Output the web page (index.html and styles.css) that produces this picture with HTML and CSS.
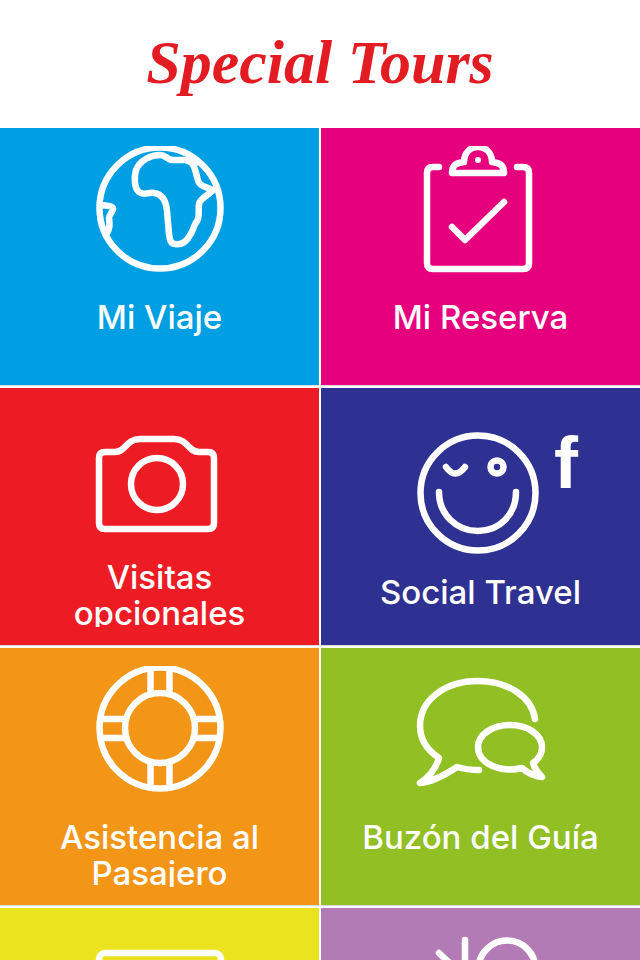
FILE: index.html
```
<!DOCTYPE html>
<html lang="es">
<head>
    <meta charset="UTF-8">
    <meta name="viewport" content="width=device-width, initial-scale=1.0">
    <title>Special Tours</title>
    <link rel="stylesheet" href="styles.css">
</head>
<body>
    <header class="header">
        <h1 class="logo">Special Tours</h1>
    </header>

    <!-- Main menu -->
    <nav class="menu">
        <a href="#viaje" class="tile blue">
            <span class="tile-content">
                <svg class="icon" viewBox="0 0 200 153" aria-hidden="true">
                    <circle cx="100" cy="62" r="60.5"/>
                    <path d="M100 9C106 9 107 14 113 14H125C133 15 134 20 136 27C138 34 138 38 143 40L153 44C149 49 140 52 139 58C138 64 140 70 137 75C133 80 134 84 130 89C127 95 122 99 115 98C110 98 110 93 109 88L107 65C106 54 102 48 94 47C87 46 84 50 79 46C74 42 74 31 76 24C80 14 91 9 100 9Z"/>
                    <path d="M128 14L135 18M41 59C45 60 51 59 53 62C54 65 49 68 49 72C50 79 50 83 46 89"/>
                </svg>
                <span class="label">Mi Viaje</span>
            </span>
        </a>
        <a href="#reserva" class="tile pink">
            <span class="tile-content">
                <svg class="icon" viewBox="0 0 200 153" aria-hidden="true">
                    <path d="M58 21H52Q46 21 46 27V117Q46 123 52 123H142Q148 123 148 117V27Q148 21 142 21H136"/>
                    <path d="M71 27H123C123 19 119 17 111 16C111 7 105 1 97 1C89 1 83 7 83 16C75 17 71 19 71 27Z"/>
                    <path d="M71 81L84 94L123 56"/>
                    <circle class="solid" cx="97" cy="14" r="3"/>
                </svg>
                <span class="label">Mi Reserva</span>
            </span>
        </a>
        <a href="#visitas" class="tile red">
            <span class="tile-content">
                <svg class="icon" viewBox="0 0 200 153" aria-hidden="true">
                    <path d="M45 46H55C66 46 66 33 80 33H114C128 33 128 46 139 46H148Q154 46 154 52V117Q154 123 148 123H45Q39 123 39 117V52Q39 46 45 46Z"/>
                    <circle cx="97" cy="78" r="26"/>
                </svg>
                <span class="label">Visitas opcionales</span>
            </span>
        </a>
        <a href="#social" class="tile navy">
            <span class="tile-content">
                <svg class="icon icon-tall" viewBox="0 0 200 168" aria-hidden="true">
                    <circle cx="97" cy="87" r="57.5"/>
                    <path d="M58 86C58 108 75 125 97 125S135 108 135 86"/>
                    <path d="M65 61Q74 74 84 61"/>
                    <circle cx="116" cy="61" r="6.5"/>
                    <text class="facebook" x="173" y="82">f</text>
                </svg>
                <span class="label">Social Travel</span>
            </span>
        </a>
        <a href="#asistencia" class="tile orange">
            <span class="tile-content">
                <svg class="icon" viewBox="0 0 200 153" aria-hidden="true">
                    <circle cx="100" cy="62" r="60.5"/>
                    <circle cx="100" cy="62" r="35"/>
                    <path class="flat" d="M90.500 3V28M109.500 3V28M90.500 96V121M109.500 96V121M41 53H66M41 72H66M134 53H159M134 72H159"/>
                </svg>
                <span class="label">Asistencia al Pasajero</span>
            </span>
        </a>
        <a href="#buzon" class="tile green">
            <span class="tile-content">
                <svg class="icon" viewBox="0 0 200 153" aria-hidden="true">
                    <path d="M154 53C151 31 127 15 97 15C64 15 39 34 39 60C39 73 46 84 58 92C55 102 50 110 39 117C52 116 64 109 76 101Q86 104 98 104"/>
                    <path d="M141 102C120 107 97 98 97 81C97 69 111 59 129 59C147 59 161 69 161 81C161 87 158 93 152 97Q154 104 161 111Q150 110 141 102Z"/>
                </svg>
                <span class="label">Buzón del Guía</span>
            </span>
        </a>
        <a href="#pantalla" class="tile yellow">
            <span class="tile-content">
                <svg class="icon" viewBox="0 0 200 153" aria-hidden="true">
                    <rect x="39" y="27" width="122" height="84" rx="6"/>
                </svg>
            </span>
        </a>
        <a href="#tiempo" class="tile purple">
            <span class="tile-content">
                <svg class="icon" viewBox="0 0 200 153" aria-hidden="true">
                    <circle cx="126" cy="43" r="28.5"/>
                    <path d="M84 14V40M58 27L76 44"/>
                </svg>
            </span>
        </a>
    </nav>
</body>
</html>
```
FILE: styles.css
```
* {
    box-sizing: border-box;
}

body {
    margin: 0;
    height: 100vh;
    overflow: hidden;
    background: #fff;
    font-family: Inter, Lato, sans-serif;
}

.header {
    display: flex;
    align-items: center;
    justify-content: center;
    height: 128px;
    padding-bottom: 4px;
}

.logo {
    margin: 0;
    color: #e31b23;
    font-family: "Liberation Serif", serif;
    font-size: 62px;
    font-style: italic;
    font-weight: bold;
    line-height: 72px;
}

.menu {
    display: grid;
    grid-template-columns: 1fr 1fr;
    gap: 2px;
}

.tile {
    padding: 18px 20px;
    border-bottom: 1px solid #dcdcdc;
    color: #fff;
    text-align: center;
    text-decoration: none;
}

/* long labels are cut at the bottom of this box */
.tile-content {
    display: flex;
    flex-direction: column;
    align-items: center;
    height: 221px;
    overflow: hidden;
}

.icon {
    flex: none;
    width: 200px;
    height: 153px;
    fill: none;
    stroke: #fff;
    stroke-width: 6.5;
    stroke-linecap: round;
    stroke-linejoin: round;
}

.icon-tall {
    height: 168px;
}

.icon .flat {
    stroke-linecap: butt;
}

.icon .solid {
    fill: #fff;
    stroke: none;
}

.icon .facebook {
    fill: #fff;
    stroke: none;
    font-family: "Liberation Sans", sans-serif;
    font-size: 72px;
    font-weight: bold;
}

.label {
    max-width: 250px;
    font-size: 33px;
    font-weight: 500;
    line-height: 36px;
}

.blue {
    background: #009fe3;
}

.pink {
    background: #e6007e;
}

.red {
    background: #ed1c24;
}

.navy {
    background: #2e3192;
}

.orange {
    background: #f39517;
}

.green {
    background: #92c024;
}

.yellow {
    background: #ece31f;
}

.purple {
    background: #b37bb5;
}
```
